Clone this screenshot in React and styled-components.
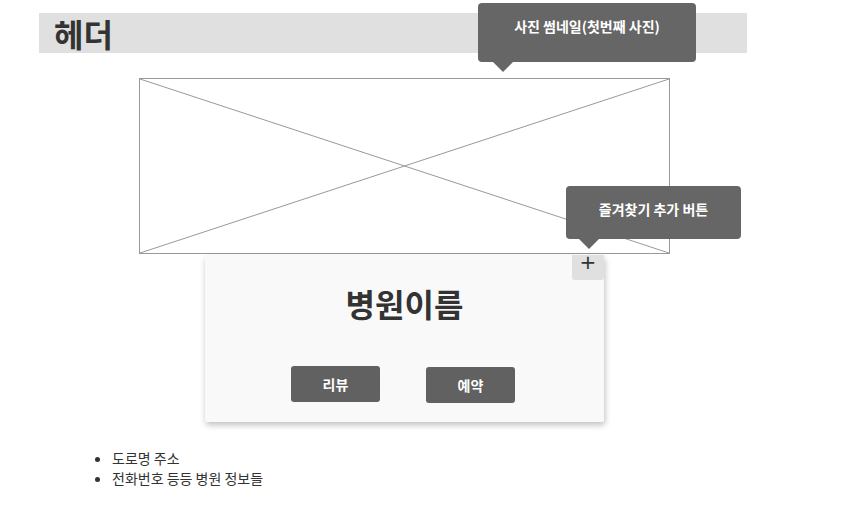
import React from 'react';
import styled, { createGlobalStyle } from 'styled-components';

const GlobalStyle = createGlobalStyle`
  body {
    margin: 0;
    background: #fff;
    font-family: "Noto Sans CJK KR", "Noto Sans", sans-serif;
    color: #333;
  }
`;

const Page = styled.div`
  position: relative;
  width: 857px;
  height: 524px;
  padding-top: 13px;
  box-sizing: border-box;
  overflow: hidden;
`;

const Header = styled.header`
  margin-left: 39px;
  width: 708px;
  height: 40px;
  background: #e0e0e0;
  display: flex;
  align-items: center;
  padding-left: 15px;
  box-sizing: border-box;
`;

const HeaderTitle = styled.h1`
  margin: 0;
  font-size: 32px;
  font-weight: 700;
  line-height: 40px;
  color: #333;
`;

const Thumb = styled.div`
  margin: 25px 0 0 139px;
  width: 531px;
  height: 176px;
  border: 1px solid #999;
  box-sizing: border-box;

  svg {
    display: block;
    width: 100%;
    height: 100%;
  }
`;

const Card = styled.section`
  position: relative;
  margin: 1px 0 0 205px;
  width: 399px;
  height: 167px;
  background: #f9f9f9;
  box-shadow: 1px 3px 6px rgba(0, 0, 0, 0.25);
  border-radius: 2px;
  display: flex;
  flex-direction: column;
  align-items: center;
`;

const CardTitle = styled.h2`
  margin: 28px 0 0;
  font-size: 32px;
  font-weight: 700;
  line-height: 40px;
  color: #333;
`;

const ButtonRow = styled.div`
  display: flex;
  gap: 46px;
  margin: 43px 3px 0 0;
`;

const Button = styled.button`
  width: 89px;
  height: 36px;
  border: none;
  border-radius: 3px;
  background: #616161;
  color: #fff;
  font-family: inherit;
  font-size: 14px;
  font-weight: 700;
  cursor: pointer;
  margin-top: ${(p) => p.$offset || 0}px;
`;

const PlusButton = styled.button`
  position: absolute;
  top: 0;
  right: 0;
  width: 32px;
  height: 25px;
  border: none;
  border-radius: 0 0 3px 3px;
  background: #e0e0e0;
  color: #333;
  font-family: "DejaVu Sans", sans-serif;
  font-size: 20px;
  line-height: 14px;
  padding: 0;
  display: flex;
  justify-content: center;
  align-items: flex-start;
`;

const InfoList = styled.ul`
  margin: 26px 0 0 72px;
  padding-left: 40px;
  font-size: 14px;
  line-height: 20px;
  color: #333;
`;

const Tooltip = styled.div`
  position: absolute;
  left: ${(p) => p.$left}px;
  top: ${(p) => p.$top}px;
  width: ${(p) => p.$width}px;
  height: ${(p) => p.$height}px;
  background: #666;
  border-radius: 4px;
  color: #fff;
  font-size: 14px;
  font-weight: 700;
  line-height: 20px;
  text-align: center;
  padding-top: ${(p) => p.$pad}px;
  box-sizing: border-box;

  &::after {
    content: '';
    position: absolute;
    top: 100%;
    left: ${(p) => p.$arrow}px;
    border-left: 10px solid transparent;
    border-right: 10px solid transparent;
    border-top: 10px solid #666;
  }
`;

const App = () => {
    return (
        <Page>
            <GlobalStyle />
            <Header>
                <HeaderTitle>헤더</HeaderTitle>
            </Header>
            <Thumb>
                <svg viewBox="0 0 529 174" preserveAspectRatio="none">
                    <line x1="0" y1="0" x2="529" y2="174" stroke="#999" strokeWidth="1" vectorEffect="non-scaling-stroke" />
                    <line x1="529" y1="0" x2="0" y2="174" stroke="#999" strokeWidth="1" vectorEffect="non-scaling-stroke" />
                </svg>
            </Thumb>
            <Card>
                <PlusButton>+</PlusButton>
                <CardTitle>병원이름</CardTitle>
                <ButtonRow>
                    <Button>리뷰</Button>
                    <Button $offset={1}>예약</Button>
                </ButtonRow>
            </Card>
            <InfoList>
                <li>도로명 주소</li>
                <li>전화번호 등등 병원 정보들</li>
            </InfoList>
            <Tooltip $left={478} $top={3} $width={218} $height={59} $pad={13} $arrow={15}>
                사진 썸네일(첫번째 사진)
            </Tooltip>
            <Tooltip $left={566} $top={186} $width={175} $height={53} $pad={13} $arrow={13}>
                즐겨찾기 추가 버튼
            </Tooltip>
        </Page>
    );
};

export default App;
